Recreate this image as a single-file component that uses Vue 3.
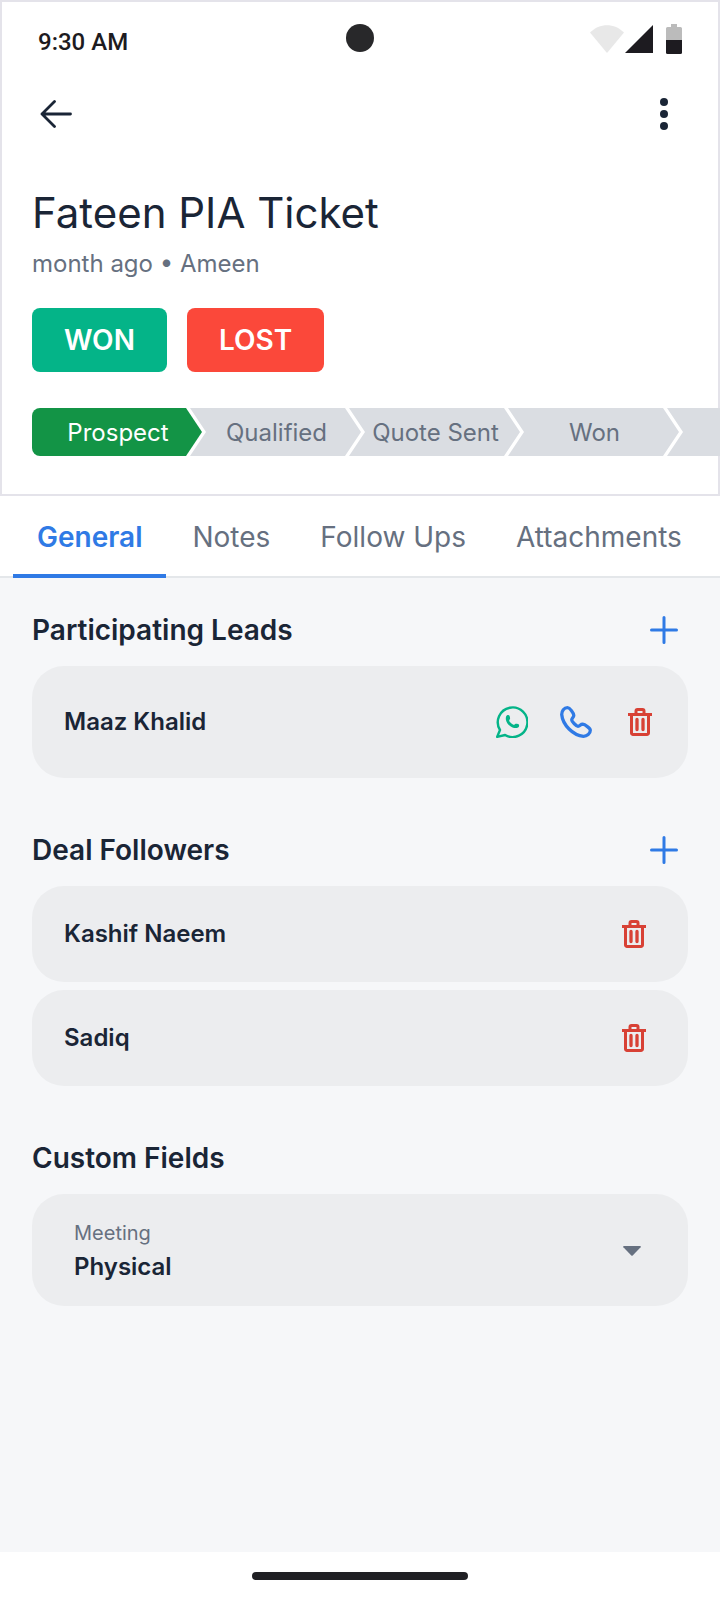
<script setup>
import { ref } from 'vue'

const stages = ['Prospect', 'Qualified', 'Quote Sent', 'Won']
const activeStage = ref('Prospect')

const tabs = ['General', 'Notes', 'Follow Ups', 'Attachments']
const activeTab = ref('General')

const leads = ref(['Maaz Khalid'])
const followers = ref(['Kashif Naeem', 'Sadiq'])
const meeting = ref('Physical')

const remove = (list, name) => list.splice(list.indexOf(name), 1)
</script>

<template>
  <div class="screen">
    <header class="header">
      <div class="status">
        <span class="time">9:30 AM</span>
        <span class="camera"></span>
        <svg class="signals" width="92" height="30" viewBox="0 0 92 30" aria-hidden="true">
          <path d="M0 8.5C9.5-1.3 24.5-1.3 34 8.5L17 29Z" fill="#e8e8e8" />
          <path d="M63 1V29H35Z" fill="#1d1b20" />
          <path d="M81 0h6v3h3.5a1.5 1.5 0 0 1 1.5 1.5V16H76V4.500A1.5 1.5 0 0 1 77.500 3H81Z" fill="#bbb" />
          <path d="M76 16h16v12.500a1.5 1.5 0 0 1-1.5 1.5h-13a1.5 1.5 0 0 1-1.5-1.5Z" fill="#1d1b20" />
        </svg>
      </div>

      <nav class="nav">
        <button class="icon-button" type="button" aria-label="Back">
          <svg width="32" height="28" viewBox="0 0 32 28" fill="none" stroke="#1a2536" stroke-width="2.8" stroke-linecap="round" stroke-linejoin="round">
            <path d="M30.500 14H2M14.500 1.500L2 14l12.500 12.500" />
          </svg>
        </button>
        <button class="icon-button" type="button" aria-label="More options">
          <svg width="8" height="32" viewBox="0 0 8 32" fill="#1a2536">
            <circle cx="4" cy="4" r="4" /><circle cx="4" cy="16" r="4" /><circle cx="4" cy="28" r="4" />
          </svg>
        </button>
      </nav>

      <h1 class="title">Fateen PIA Ticket</h1>
      <p class="subtitle">month ago • Ameen</p>

      <div class="outcomes">
        <button class="outcome won" type="button">WON</button>
        <button class="outcome lost" type="button">LOST</button>
      </div>

      <div class="stages">
        <button
          v-for="stage in stages"
          :key="stage"
          type="button"
          class="stage"
          :class="{ active: stage === activeStage }"
          @click="activeStage = stage"
        >{{ stage }}</button>
        <span class="stage rest"></span>
      </div>
    </header>

    <div class="tabs" role="tablist">
      <button
        v-for="tab in tabs"
        :key="tab"
        type="button"
        role="tab"
        class="tab"
        :class="{ active: tab === activeTab }"
        :aria-selected="tab === activeTab"
        @click="activeTab = tab"
      >{{ tab }}</button>
    </div>

    <main class="content">
      <section class="section">
        <div class="section-head">
          <h2>Participating Leads</h2>
          <button class="icon-button" type="button" aria-label="Add lead">
            <svg width="28" height="28" viewBox="0 0 28 28" stroke="#2f7ae5" stroke-width="3" stroke-linecap="round"><path d="M14 1.500v25M1.500 14h25" /></svg>
          </button>
        </div>
        <div v-for="name in leads" :key="name" class="card lead">
          <span class="name">{{ name }}</span>
          <button class="action" type="button" aria-label="Message on WhatsApp">
            <svg width="32" height="32" viewBox="0 0 32 32">
              <path d="M4 24L1.200 30.800l7.900-1.800A14.800 14.800 0 1 0 4 24Z" fill="none" stroke="#04b488" stroke-width="2.4" stroke-linejoin="round" />
              <path d="M10.200 10.200c.5-1.200 2.800-1.500 3.300-.5.5 1.200.9 2.800.3 3.600-.6.8-.9 1.300-.3 2.100 1 1.400 2.200 2.500 3.500 3.200.8.4 1.200.1 1.900-.4 1-.8 3.300-.3 4 .3.5.8.1 2.500-.9 3.100-1.300.8-3.700.6-5.500-.1-3.400-1.500-6-4.500-6.600-7.800-.2-1.200-.1-2.500.3-3.500Z" fill="#04b488" />
            </svg>
          </button>
          <button class="action" type="button" aria-label="Call">
            <svg width="32" height="32" viewBox="0 0 32 32" fill="none" stroke="#2f7ae5" stroke-width="3.3" stroke-linejoin="round">
              <path d="M7.500 1.700C4 1.700 1.700 5 1.700 8.500c1 10.500 11.300 20.800 21.800 21.800 3.500 0 6.800-2.500 6.800-6 0-2-5.300-5.800-7.600-6.100-2.200-.2-2.700 2.100-4.700 2.100-1.500 0-6.300-4.800-6.300-6.300 0-2 2.100-2.500 2.100-4.700C13.600 7 10 1.700 7.500 1.700Z" />
            </svg>
          </button>
          <button class="action" type="button" aria-label="Delete" @click="remove(leads, name)">
            <svg width="24" height="28" viewBox="0 0 24 28" fill="none" stroke="#d84135" stroke-width="3">
              <path d="M8 6V3a1.500 1.500 0 0 1 1.500-1.500h5A1.500 1.500 0 0 1 16 3v3M0 6.500h24M3.500 7v18A1.500 1.500 0 0 0 5 26.500h14a1.500 1.500 0 0 0 1.500-1.500V7" />
              <path d="M9 11.500v10M15 11.500v10" stroke-width="3.300" stroke-linecap="round" />
            </svg>
          </button>
        </div>
      </section>

      <section class="section">
        <div class="section-head">
          <h2>Deal Followers</h2>
          <button class="icon-button" type="button" aria-label="Add follower">
            <svg width="28" height="28" viewBox="0 0 28 28" stroke="#2f7ae5" stroke-width="3" stroke-linecap="round"><path d="M14 1.500v25M1.500 14h25" /></svg>
          </button>
        </div>
        <div class="list">
          <div v-for="name in followers" :key="name" class="card follower">
            <span class="name">{{ name }}</span>
            <button class="action" type="button" aria-label="Delete" @click="remove(followers, name)">
              <svg width="24" height="28" viewBox="0 0 24 28" fill="none" stroke="#d84135" stroke-width="3">
                <path d="M8 6V3a1.500 1.500 0 0 1 1.500-1.500h5A1.500 1.500 0 0 1 16 3v3M0 6.500h24M3.500 7v18A1.500 1.500 0 0 0 5 26.500h14a1.500 1.500 0 0 0 1.500-1.500V7" />
                <path d="M9 11.500v10M15 11.500v10" stroke-width="3.300" stroke-linecap="round" />
              </svg>
            </button>
          </div>
        </div>
      </section>

      <section class="section">
        <div class="section-head">
          <h2>Custom Fields</h2>
        </div>
        <div class="card field">
          <div class="field-body">
            <label for="meeting">Meeting</label>
            <select id="meeting" v-model="meeting">
              <option>Physical</option>
            </select>
          </div>
          <svg width="18" height="10" viewBox="0 0 18 10" fill="#667080" aria-hidden="true">
            <path d="M.8 0h16.400q1 .2.400 1.200L9.700 9.500q-.7.600-1.400 0L.4 1.200Q-.2.200.8 0Z" />
          </svg>
        </div>
      </section>
    </main>

    <footer class="gesture"><span class="pill"></span></footer>
  </div>
</template>

<style>
body {
  margin: 0;
}
</style>

<style scoped>
.screen {
  display: flex;
  flex-direction: column;
  min-height: 100vh;
  background: #f6f7f9;
  color: #1a2536;
  font-family: Inter, "Liberation Sans", sans-serif;
}

button {
  margin: 0;
  padding: 0;
  border: 0;
  background: none;
  font: inherit;
  color: inherit;
  cursor: pointer;
}

svg {
  display: block;
  flex: none;
}

h1,
h2,
p {
  margin: 0;
}

.header {
  padding: 22px 30px 38px;
  border: 2px solid #e4e3ea;
  background: #fff;
}

.status {
  display: grid;
  grid-template-columns: 1fr auto 1fr;
  height: 32px;
  padding: 0 6px;
}

.time {
  align-self: end;
  font: 500 24px/28px Roboto, sans-serif;
  color: #1d1b20;
}

.camera {
  width: 28px;
  height: 28px;
  border-radius: 50%;
  background: #28282a;
}

.signals {
  justify-self: end;
}

.nav {
  display: flex;
  justify-content: space-between;
  margin-top: 34px;
}

.icon-button {
  display: grid;
  place-items: center;
  width: 48px;
  height: 48px;
}

.title {
  margin-top: 49px;
  font-size: 42px;
  line-height: 52px;
  font-weight: 400;
}

.subtitle {
  margin-top: 8px;
  font-size: 24px;
  line-height: 34px;
  color: #667080;
}

.outcomes {
  display: flex;
  gap: 20px;
  margin-top: 27px;
}

.outcome {
  height: 64px;
  padding: 0 32px;
  border-radius: 8px;
  color: #fff;
  font-size: 28px;
  font-weight: 600;
}

.won {
  background: #04b488;
}

.lost {
  background: #fb483a;
}

.stages {
  display: flex;
  height: 48px;
  margin: 36px -32px 0 0;
  overflow: hidden;
}

.stage {
  flex: none;
  width: 171px;
  margin-left: -12px;
  padding-left: 2px;
  box-sizing: border-box;
  background: #dadde2;
  color: #667080;
  font-size: 24px;
  text-align: center;
  clip-path: polygon(0 0, calc(100% - 16px) 0, 100% 50%, calc(100% - 16px) 100%, 0 100%, 16px 50%);
}

.stage:first-child {
  width: 170px;
  margin-left: 0;
  border-radius: 8px 0 0 8px;
  clip-path: polygon(0 0, calc(100% - 16px) 0, 100% 50%, calc(100% - 16px) 100%, 0 100%);
}

.stage.active {
  background: #139446;
  color: #fff;
}

.stage.rest {
  flex: 1 0 0;
  width: auto;
  clip-path: polygon(0 0, 100% 0, 100% 100%, 0 100%, 16px 50%);
}

.tabs {
  display: flex;
  gap: 2px;
  height: 82px;
  padding-left: 13px;
  background: #fff;
  box-shadow: inset 0 -2px #e4e7ea;
}

.tab {
  padding: 0 24px;
  color: #667080;
  font-size: 28px;
  white-space: nowrap;
}

.tab.active {
  color: #2f7ae5;
  font-weight: 600;
  box-shadow: inset 0 -4px #2f7ae5;
}

.content {
  display: flex;
  flex: 1;
  flex-direction: column;
  gap: 52px;
  padding: 32px;
}

.section-head {
  display: flex;
  align-items: center;
  justify-content: space-between;
  height: 40px;
  margin-bottom: 16px;
}

h2 {
  font-size: 28px;
  line-height: 40px;
  font-weight: 600;
}

.list {
  display: grid;
  gap: 8px;
}

.card {
  display: flex;
  align-items: center;
  box-sizing: border-box;
  border-radius: 32px;
  background: #ecedef;
}

.lead {
  gap: 32px;
  min-height: 112px;
  padding: 0 32px;
}

.follower {
  min-height: 96px;
  padding: 0 38px 0 32px;
}

.name {
  flex: 1;
  padding-bottom: 2px;
  font-size: 24px;
  font-weight: 600;
}

.action {
  display: grid;
  place-items: center;
  width: 32px;
  height: 32px;
}

.field {
  min-height: 112px;
  padding: 2px 47px 0 42px;
}

.field-body {
  display: grid;
  flex: 1;
}

label {
  font-size: 20px;
  line-height: 32px;
  color: #667080;
}

select {
  width: 100%;
  height: 36px;
  margin: 0;
  padding: 0;
  border: 0;
  appearance: none;
  background: none;
  color: inherit;
  font: 600 24px/36px Inter, "Liberation Sans", sans-serif;
}

.gesture {
  display: grid;
  place-items: center;
  height: 48px;
  background: #fff;
}

.pill {
  width: 216px;
  height: 8px;
  border-radius: 4px;
  background: #202024;
}
</style>
